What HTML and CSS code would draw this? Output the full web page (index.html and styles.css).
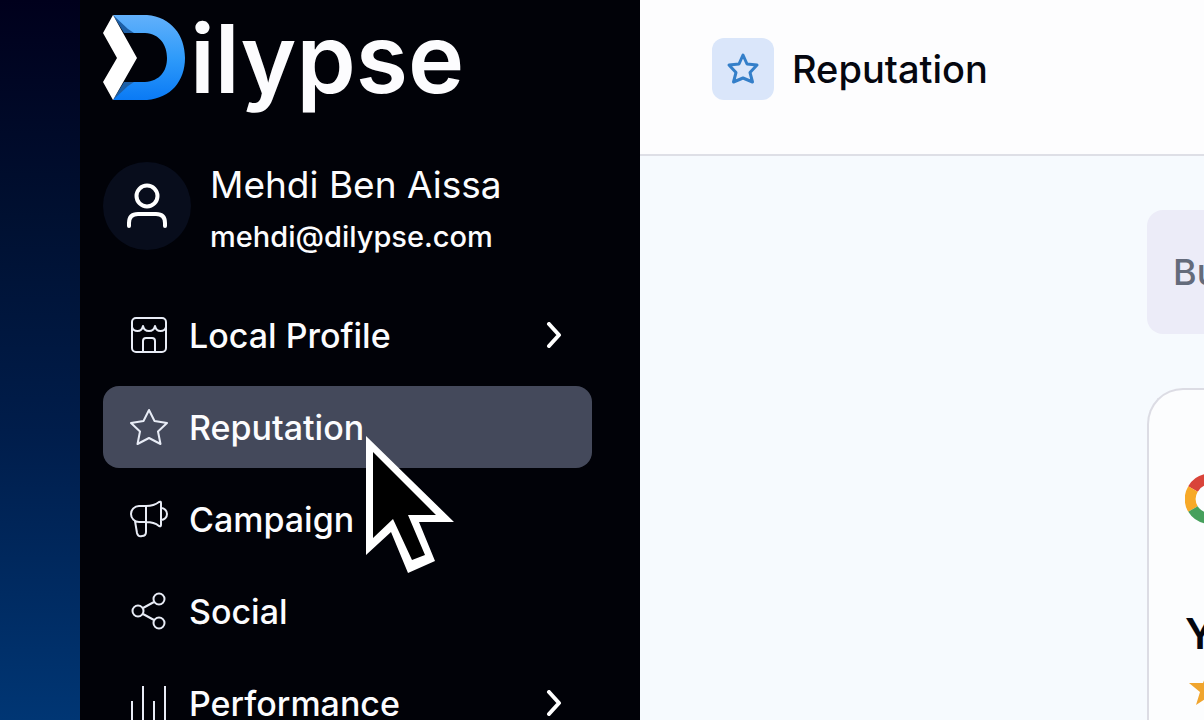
FILE: index.html
```html
<!DOCTYPE html>
<html lang="en">
<head>
    <meta charset="UTF-8">
    <meta name="viewport" content="width=device-width, initial-scale=1.0">
    <title>Dilypse - Reputation</title>
    <link rel="stylesheet" href="styles.css">
</head>
<body>
    <div class="app">
        <aside class="sidebar">
            <a class="logo" href="#" aria-label="Dilypse">
                <svg class="logo-mark" viewBox="0 0 84 86" aria-hidden="true">
                    <defs>
                        <linearGradient id="blue" x1="0" y1="0" x2="0" y2="1">
                            <stop offset="0" stop-color="#62b0fb"/>
                            <stop offset="0.5" stop-color="#2f9bfa"/>
                            <stop offset="1" stop-color="#0a7af5"/>
                        </linearGradient>
                    </defs>
                    <path fill="url(#blue)" d="M10 0H44C68 2 82 20 82 43S68 83 44 85H10L23 67H42C57 66 64 56 64 43S57 19 42 18H23Z"/>
                    <path fill="#1d5fa6" d="M10 0L25 14L31 18H21ZM10 85L25 71L31 67H21Z"/>
                    <path fill="#fff" d="M10 0L34 43L10 85L0 67L14 43L0 18Z"/>
                </svg>
                <span class="logo-text">ilypse</span>
            </a>
            <div class="user">
                <div class="avatar">
                    <svg viewBox="0 0 42 46" fill="none" stroke="#fff" stroke-width="4" stroke-linecap="round" aria-hidden="true">
                        <circle cx="21" cy="13" r="10.500"/>
                        <path d="M3 43V40Q3 31 12 31H30Q39 31 39 40V43"/>
                    </svg>
                </div>
                <div class="user-info">
                    <div class="user-name">Mehdi Ben Aissa</div>
                    <div class="user-mail">mehdi@dilypse.com</div>
                </div>
            </div>
            <nav class="menu">
                <a class="item" href="#">
                    <svg class="icon" viewBox="0 0 38 38" aria-hidden="true">
                        <rect x="2" y="2" width="34" height="34" rx="4"/>
                        <path d="M2 11Q3 15 7.500 15T13 10Q14 15 19 15T25 10Q26 15 30.500 15T36 11M13 36V25Q13 22 16 22H22Q25 22 25 25V36"/>
                    </svg>
                    <span>Local Profile</span>
                    <svg class="arrow" viewBox="0 0 16 26" aria-hidden="true"><path d="M3 2L13 13L3 24"/></svg>
                </a>
                <a class="item active" href="#">
                    <svg class="icon" viewBox="0 0 38 38" aria-hidden="true">
                        <path d="M19 2L24.500 13L37 15L28 23.500L30.500 36L19 30L7.500 36L10 23.500L1 15L13.500 13Z"/>
                    </svg>
                    <span>Reputation</span>
                </a>
                <a class="item" href="#">
                    <svg class="icon" viewBox="0 0 38 38" aria-hidden="true">
                        <path d="M16 6H9A8 8 0 0 0 9 22H16ZM16 6Q24 6 29 2Q31 1 31 3V25Q31 27 29 26Q24 22 16 22M5 21L7 33Q8 37 12 36Q16 36 16 32V22M31 8A6 6 0 0 1 31 20"/>
                    </svg>
                    <span>Campaign</span>
                </a>
                <a class="item" href="#">
                    <svg class="icon" viewBox="0 0 38 38" aria-hidden="true">
                        <circle cx="8" cy="19" r="5.500"/>
                        <circle cx="29" cy="7" r="5.500"/>
                        <circle cx="29" cy="31" r="5.500"/>
                        <path d="M13 16L24 10M13 22L24 28"/>
                    </svg>
                    <span>Social</span>
                </a>
                <a class="item" href="#">
                    <svg class="icon" viewBox="0 0 38 38" aria-hidden="true">
                        <path d="M2 17V36M13 2V36M24 17V36M35 2V36"/>
                    </svg>
                    <span>Performance</span>
                    <svg class="arrow" viewBox="0 0 16 26" aria-hidden="true"><path d="M3 2L13 13L3 24"/></svg>
                </a>
            </nav>
        </aside>
        <main class="main">
            <header class="header">
                <div class="header-icon">
                    <svg viewBox="0 0 38 38" aria-hidden="true">
                        <path d="M19 5L23 14L33 15L26 22.500L28.500 32L19 28L9.500 32L12 22.500L5 15L15 14Z"/>
                    </svg>
                </div>
                <h1>Reputation</h1>
            </header>
            <section class="content">
                <div class="filter">Bu</div>
                <div class="card">
                    <svg class="google" viewBox="0 0 50 50" fill="none" stroke-width="11" aria-hidden="true">
                        <path stroke="#d9443a" d="M39 11A19.500 19.500 0 0 0 8 15"/>
                        <path stroke="#f7a928" d="M8 15A19.500 19.500 0 0 0 8 35"/>
                        <path stroke="#46a05c" d="M8 35A19.500 19.500 0 0 0 38 39"/>
                        <path stroke="#4285f4" d="M38 39Q44 34 44 26H26"/>
                    </svg>
                    <h2>Y</h2>
                    <svg class="rate" viewBox="0 0 38 38" aria-hidden="true">
                        <path fill="#f0a52e" d="M19 0L24 13H38L27 22L31 35L19 27L7 35L11 22L0 13H14Z"/>
                    </svg>
                </div>
            </section>
        </main>
    </div>
    <!-- mouse pointer -->
    <svg class="pointer" viewBox="0 0 90 140" aria-hidden="true">
        <path fill="#fff" d="M1 0L89 86H54L70 125L43 137L26 96L1 119Z"/>
        <path fill="#000" d="M8 16L71 79H43L60 119L47 124L28 83L8 102Z"/>
    </svg>
</body>
</html>
```
FILE: styles.css
```css
*{
    box-sizing: border-box;
}
body{
    margin: 0;
    font-family: Inter, "Liberation Sans", sans-serif;
    background: linear-gradient(#00001c 0, #001031 30%, #001d4b 60%, #003674 100%);
    overflow: hidden;
}
.app{
    display: grid;
    grid-template-columns: 560px minmax(0, 1fr);
    height: 100vh;
    padding-left: 80px;
    overflow: hidden;
}
.sidebar{
    background-color: #010208;
    padding: 15px 48px 0 23px;
    color: #fcfcfe;
    overflow: hidden;
}
.logo{
    display: flex;
    height: 103px;
    color: #fcfcfe;
    text-decoration: none;
}
.logo-mark{
    width: 84px;
    height: 86px;
    margin-right: 3px;
}
.logo-text{
    font-size: 95px;
    line-height: 88px;
    font-weight: 600;
}
.user{
    display: flex;
    gap: 19px;
    margin-top: 44px;
}
.avatar{
    display: flex;
    align-items: center;
    justify-content: center;
    width: 88px;
    height: 88px;
    border-radius: 50%;
    background-color: #080d1c;
}
.avatar svg{
    width: 42px;
    height: 46px;
}
.user-info{
    display: flex;
    flex-direction: column;
    gap: 6px;
}
.user-name{
    font-size: 37px;
    line-height: 46px;
}
.user-mail{
    font-size: 29px;
    line-height: 46px;
    font-weight: 500;
}
.menu{
    display: flex;
    flex-direction: column;
    gap: 10px;
    margin-top: 34px;
}
.item{
    display: flex;
    align-items: center;
    gap: 21px;
    height: 82px;
    padding: 0 30px 0 27px;
    border-radius: 16px;
    color: #fcfcfe;
    font-size: 34px;
    font-weight: 500;
    text-decoration: none;
}
.item.active{
    background-color: #44495b;
}
.icon{
    width: 38px;
    height: 38px;
    fill: none;
    stroke: #e8ecf6;
    stroke-width: 2;
    stroke-linejoin: round;
}
.arrow{
    width: 16px;
    height: 26px;
    margin-left: auto;
    fill: none;
    stroke: #fff;
    stroke-width: 4;
    stroke-linecap: round;
    stroke-linejoin: round;
}
.main{
    background-color: #f6fafe;
    overflow: hidden;
}
.header{
    display: flex;
    align-items: center;
    gap: 18px;
    height: 156px;
    padding: 0 72px 16px;
    background-color: #fdfdfe;
    border-bottom: 2px solid #dedfe6;
}
.header-icon{
    display: flex;
    align-items: center;
    justify-content: center;
    width: 62px;
    height: 62px;
    border-radius: 12px;
    background-color: #dae6fa;
}
.header-icon svg{
    width: 38px;
    height: 38px;
    fill: none;
    stroke: #347fc9;
    stroke-width: 3;
    stroke-linejoin: round;
}
h1{
    margin: 0;
    font-size: 38px;
    line-height: 46px;
    font-weight: 500;
    color: #05070f;
}
.content{
    padding: 54px 0 0 507px;
}
.filter{
    height: 124px;
    padding-left: 26px;
    border-radius: 16px 0 0 16px;
    background-color: #ececf8;
    color: #646b7b;
    font-size: 36px;
    font-weight: 500;
    line-height: 124px;
    overflow: hidden;
}
.card{
    height: 480px;
    margin-top: 54px;
    padding: 84px 0 0 36px;
    border: 2px solid #dcdce4;
    border-right: 0;
    border-radius: 36px 0 0 0;
    background-color: #fcfdfe;
    overflow: hidden;
}
.google{
    display: block;
    width: 50px;
    height: 50px;
}
h2{
    margin: 84px 0 0;
    font-size: 42px;
    line-height: 52px;
    font-weight: 600;
    color: #05070f;
}
.rate{
    display: block;
    width: 38px;
    height: 38px;
    margin: 10px 0 0 4px;
}
.pointer{
    position: absolute;
    left: 365px;
    top: 436px;
    width: 90px;
    height: 140px;
}
```
